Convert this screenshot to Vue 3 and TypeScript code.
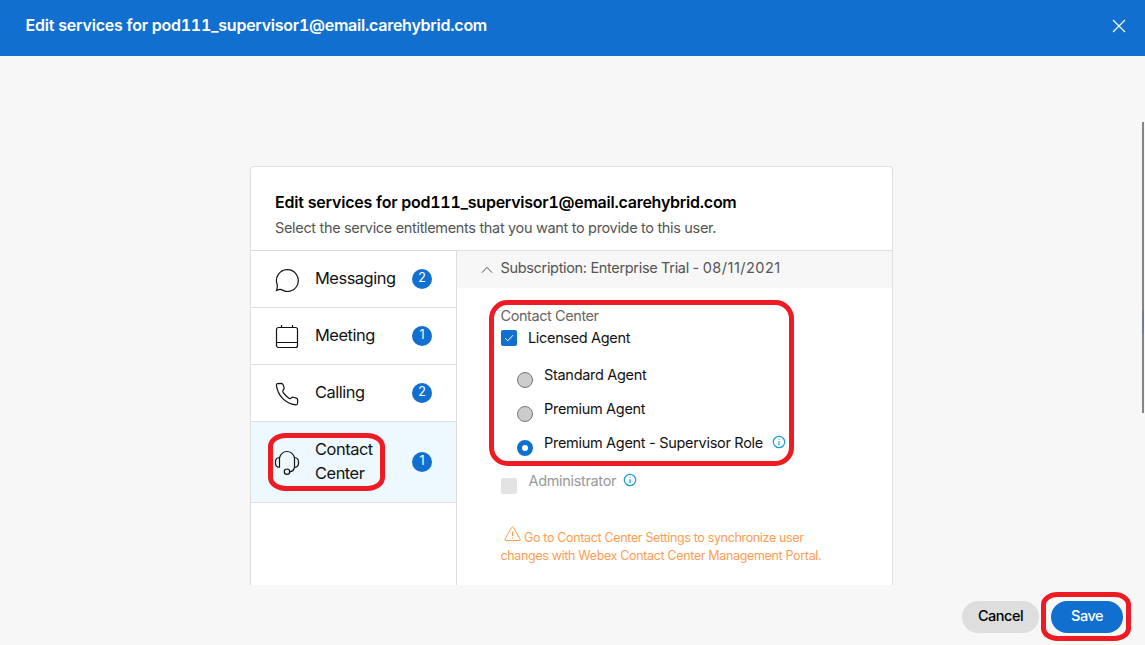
<script setup lang="ts">
interface Service { id: string; label: string; count: number; active?: boolean }
interface Role { label: string; selected?: boolean; info?: boolean }

const user = 'pod111_supervisor1@email.carehybrid.com'
const services: Service[] = [
  { id: 'messaging', label: 'Messaging', count: 2 },
  { id: 'meeting', label: 'Meeting', count: 1 },
  { id: 'calling', label: 'Calling', count: 2 },
  { id: 'contact', label: 'Contact Center', count: 1, active: true },
]
const roles: Role[] = [
  { label: 'Standard Agent' },
  { label: 'Premium Agent' },
  { label: 'Premium Agent - Supervisor Role', selected: true, info: true },
]
</script>

<template>
  <div class="page">
    <header class="topbar">
      <span class="title">Edit services for <span class="user">{{ user }}</span></span>
      <svg class="close" width="14" height="14" viewBox="0 0 14 14"><path d="M1 1L13 13M13 1L1 13" /></svg>
    </header>

    <main class="card">
      <div class="card-head">
        <h1 class="title">Edit services for <span class="user">{{ user }}</span></h1>
        <p>Select the service entitlements that you want to provide to this user.</p>
      </div>
      <div class="card-body">
        <nav class="services">
          <div v-for="s in services" :key="s.id" class="service" :class="{ active: s.active }">
            <svg class="service-icon" width="26" height="26" viewBox="0 0 26 26">
              <path v-if="s.id === 'messaging'" d="M7.3 23.6A10.9 10.9 0 1 0 3.1 18.2C3.6 20.3 3.2 22.5 2.5 24.5C4.1 23.8 5.7 23.1 7.3 23.6Z" />
              <template v-else-if="s.id === 'meeting'">
                <rect x="2.5" y="4.5" width="21" height="20" rx="2" />
                <path d="M2.5 19.5H23.5M7.5 2V5M18.5 2V5" />
              </template>
              <path v-else-if="s.id === 'calling'" transform="translate(0 1)" d="M3.5 2.6L7.4 2.3C8.3 2.3 8.8 3 9.1 3.8L10.1 6.6C10.4 7.5 10.1 8.2 9.4 8.8C8.3 9.8 8.5 10.7 9.2 11.7C10.7 13.8 12.5 15.6 14.6 17C15.6 17.7 16.5 17.8 17.4 16.8C18 16.1 18.8 15.9 19.7 16.2L22.3 17.1C23.2 17.5 23.7 18 23.7 18.9L23.5 22.5C23.4 23.5 22.7 24 21.7 23.9C11.1 22.5 3.7 14.5 2.4 4.1C2.3 3.2 2.7 2.7 3.5 2.6Z" />
              <template v-else>
                <path d="M5.5 18.5V8.8C6.7 5 9.3 2.5 13 2.5S19.3 5 20.5 8.8V18.5M5.5 8.5C2.8 8.7 1.4 10.8 1.4 13.5S2.8 18.3 5.5 18.5M20.5 8.5C23.2 8.7 24.6 10.8 24.6 13.5S23.2 18.3 20.5 18.5C19.8 21 18.2 22.6 15.8 22.9" />
                <circle cx="13" cy="22.7" r="2.7" />
              </template>
            </svg>
            <span class="service-label">{{ s.label }}</span>
            <span class="badge">{{ s.count }}</span>
          </div>
        </nav>

        <section class="details">
          <div class="subscription">
            <svg width="12" height="8" viewBox="0 0 12 8"><path d="M1 6.7L6 1.3L11 6.7" /></svg>
            <div class="subscription-name">Subscription: Enterprise Trial - <span class="date">08/11/2021</span></div>
          </div>
          <div class="options">
            <div class="group-label">Contact Center</div>
            <div class="licensed">
              <span class="checkbox"><svg width="16" height="16" viewBox="0 0 16 16"><path d="M4 8L6.8 10.8L12 5.2" /></svg></span>
              <span class="licensed-label">Licensed Agent</span>
            </div>
            <div v-for="r in roles" :key="r.label" class="role">
              <span class="radio" :class="{ selected: r.selected }"></span>
              <span class="role-label">{{ r.label }}</span>
              <svg v-if="r.info" class="info" width="14" height="14" viewBox="0 0 14 14"><circle cx="7" cy="7" r="5.7" /><path d="M7 6.2V10.2M7 3.7V4.8" /></svg>
            </div>
            <div class="administrator">
              <span class="checkbox disabled"></span>
              <span class="admin-label">Administrator</span>
              <svg class="info" width="14" height="14" viewBox="0 0 14 14"><circle cx="7" cy="7" r="5.7" /><path d="M7 6.2V10.2M7 3.7V4.8" /></svg>
            </div>
            <div class="warning">
              <div class="warning-first">
                <svg width="17" height="16" viewBox="0 0 17 16"><path d="M7.6 1.5Q8.5 .2 9.4 1.5L16 13Q16.6 14.4 15.2 14.5H1.8Q.4 14.4 1 13ZM8.5 5.5V10M8.5 11.3V12.4" /></svg>
                <span>Go to Contact Center Settings to synchronize user</span>
              </div>
              <div>changes with Webex Contact Center Management Portal.</div>
            </div>
          </div>
        </section>
      </div>
    </main>

    <footer class="actions">
      <button class="cancel">Cancel</button>
      <button class="save">Save</button>
    </footer>

    <div class="scrollbar"></div>
    <svg class="marks" width="1145" height="645" viewBox="0 0 1145 645">
      <rect x="491.5" y="302.5" width="300" height="161" rx="16" />
      <rect x="270.5" y="435.5" width="112" height="53" rx="15" ry="11" />
      <rect x="1043.5" y="594.5" width="85" height="44" rx="14" ry="10" />
    </svg>
  </div>
</template>

<style>
body { margin: 0; overflow: hidden; }
</style>

<style scoped>
.page {
  position: relative;
  box-sizing: border-box;
  width: 1145px;
  height: 645px;
  overflow: hidden;
  display: flex;
  flex-direction: column;
  background: #f7f7f7;
  color: #121212;
  font-family: Inter, "Liberation Sans", sans-serif;
  font-size: 14.5px;
  letter-spacing: -0.33px;
}
svg { fill: none; flex: none; }
.topbar {
  display: flex;
  align-items: center;
  justify-content: space-between;
  height: 56px;
  box-sizing: border-box;
  padding: 0 19px 4px 25.5px;
  background: #1170cf;
  color: #fff;
}
.topbar .title { margin-top: -2px; }
.title { font-size: 16px; font-weight: 600; line-height: 24px; letter-spacing: -0.18px; white-space: nowrap; }
.user { letter-spacing: -0.25px; font-variant-numeric: tabular-nums; }
.close { stroke: #fff; stroke-width: 1.2; }
.card {
  box-sizing: border-box;
  width: 643px;
  height: 419px;
  margin: 110px 0 0 250px;
  border: 1px solid #dedede;
  border-bottom: 0;
  border-radius: 4px 4px 0 0;
  background: #fff;
}
.card-head { height: 84px; padding: 23px 24px 0; box-sizing: border-box; border-bottom: 1px solid #dedede; }
.card-head h1 { margin: 0; color: #000; }
.card-head p { margin: 4px 0 0; line-height: 20px; color: #545454; white-space: nowrap; }
.card-body { display: flex; height: 334px; }
.services { width: 205px; border-right: 1px solid #dedede; }
.service {
  display: flex;
  align-items: center;
  box-sizing: border-box;
  height: 57px;
  padding-left: 23px;
  border-bottom: 1px solid #dedede;
}
.service.active { height: 81px; background: #edf8ff; }
.service-icon { stroke: #121212; stroke-width: 1.2; }
.service-label { width: 82px; margin: -2px 15px 0; line-height: 24px; font-size: 16.4px; letter-spacing: -0.45px; }
.badge {
  width: 20px;
  height: 20px;
  border-radius: 50%;
  background: #1170cf;
  color: #fff;
  font-size: 12.5px;
  line-height: 18px;
  letter-spacing: 0;
  text-align: center;
}
.details { flex: 1; min-width: 0; white-space: nowrap; }
.subscription {
  display: flex;
  align-items: center;
  gap: 8px;
  height: 37px;
  box-sizing: border-box;
  padding: 0 0 3px 23.5px;
  background: #f7f7f7;
  color: #545454;
  letter-spacing: -0.33px;
}
.subscription-name { margin-top: -1px; }
.date { letter-spacing: 0.5px; }
.subscription svg { stroke: #545454; margin-top: 4px; }
.options { padding: 19px 0 0 43.5px; }
.group-label { line-height: 18px; color: #666; letter-spacing: -0.42px; }
.licensed { display: flex; align-items: center; gap: 11.5px; height: 26px; }
.licensed-label { margin-top: -2px; }
.checkbox { width: 16px; height: 16px; border-radius: 2px; background: #1170cf; }
.checkbox svg { display: block; stroke: #fff; }
.checkbox.disabled { margin-top: 10px; background: #e3e3e3; }
.role { display: flex; align-items: center; height: 34px; padding-left: 16px; }
.licensed + .role { margin-top: 7px; }
.radio {
  box-sizing: border-box;
  width: 16px;
  height: 16px;
  margin: 9px 11.5px 0 0;
  border: 1px solid #777;
  border-radius: 50%;
  background: #ccc;
}
.radio.selected { border: 5px solid #1170cf; background: #fff; }
.role-label { margin-top: -2px; letter-spacing: -0.3px; }
.info { margin: -2px 0 0 9px; stroke: #18a0d7; stroke-width: 1.2; }
.administrator { display: flex; align-items: center; height: 38px; margin-top: 2px; color: #999; }
.admin-label { margin: -2px 0 0 12px; }
.administrator .info { margin-left: 7px; }
.warning { margin-top: 29px; font-size: 12.5px; line-height: 18px; letter-spacing: -0.34px; color: #ff9d52; }
.warning-first { display: flex; gap: 3px; padding-left: 3.5px; }
.warning svg { stroke: #ff9d52; margin-top: -3px; }
.actions { display: flex; gap: 12px; justify-content: flex-end; padding: 16px 22px 0 0; }
button {
  height: 32px;
  padding: 0 0 2px;
  border: 0;
  border-radius: 16px;
  font: 500 14.5px/30px Inter, "Liberation Sans", sans-serif;
  letter-spacing: -0.5px;
}
.cancel { width: 77px; background: #dedede; color: #000; }
.save { width: 72px; background: #1170cf; color: #fff; }
.scrollbar { position: absolute; left: 1142px; top: 122px; width: 2px; height: 291px; background: linear-gradient(#858585 0 188px, #6c8094 188px 212px, #858585 212px); }
.marks { position: absolute; inset: 0; pointer-events: none; stroke: #ed1c24; stroke-width: 5; }
</style>
